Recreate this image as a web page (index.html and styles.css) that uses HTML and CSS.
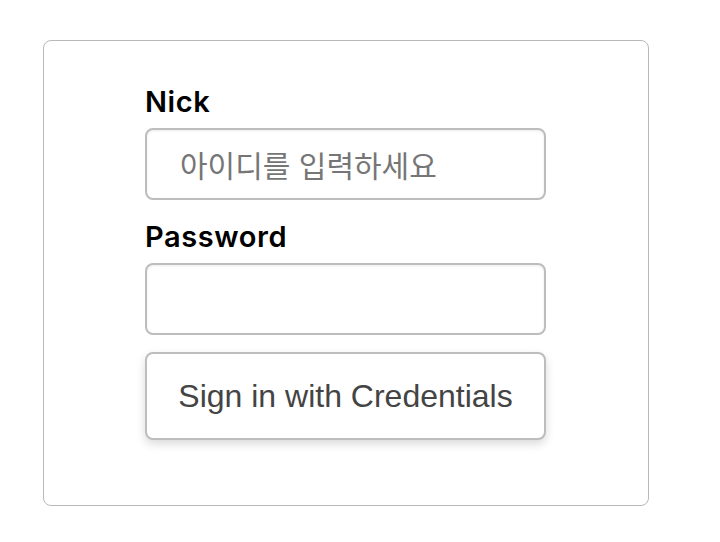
FILE: index.html
```html
<!DOCTYPE html>
<html lang="ko">
<head>
<meta charset="utf-8">
<title>Sign in</title>
<link rel="stylesheet" href="styles.css">
</head>
<body>
<div class="page">
  <form class="card">
    <label class="label" for="nick">Nick</label>
    <input class="field" id="nick" type="text" placeholder="아이디를 입력하세요">
    <label class="label label-gap" for="pw">Password</label>
    <input class="field" id="pw" type="password">
    <button class="btn" type="button">Sign in with Credentials</button>
  </form>
</div>
</body>
</html>
```
FILE: styles.css
```css
html, body {
  margin: 0;
  padding: 0;
  background: #ffffff;
}
.page {
  padding: 40px 0 0 43px;
}
.card {
  box-sizing: border-box;
  width: 606px;
  border: 1px solid #b8b8b8;
  border-radius: 8px;
  padding: 44px 102px 65px 101px;
  display: flex;
  flex-direction: column;
  font-family: Inter, "Noto Sans", sans-serif;
}
.label {
  font-size: 29px;
  line-height: 34px;
  font-weight: 560;
  letter-spacing: 0.6px;
  color: #000;
  margin-bottom: 9px;
}
.label-gap {
  margin-top: 20px;
}
.field {
  box-sizing: border-box;
  width: 401px;
  height: 72px;
  border: 2px solid #bdbdbd;
  border-radius: 8px;
  box-shadow: inset 0 1px 3px rgba(0,0,0,0.08);
  padding: 0 0 0 33px;
  margin: 0;
  font-family: "Noto Sans CJK KR", "Noto Sans", sans-serif;
  font-size: 30px;
  color: #333;
  background: #fff;
  outline: none;
}
.field::placeholder {
  color: #767676;
}
.btn {
  box-sizing: border-box;
  width: 401px;
  height: 88px;
  margin-top: 17px;
  border: 2px solid #bdbdbd;
  border-radius: 8px;
  background: #fff;
  box-shadow: 0 4px 10px rgba(0,0,0,0.15);
  font-family: "Liberation Sans", Arial, sans-serif;
  font-size: 32px;
  color: #444;
  padding: 0;
  cursor: pointer;
}
```
